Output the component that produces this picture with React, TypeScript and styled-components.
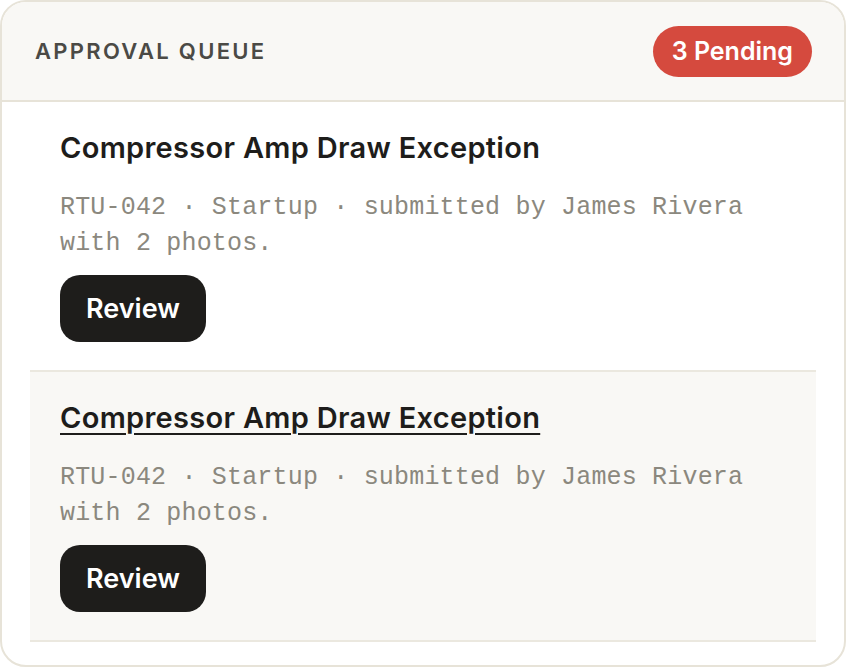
import styled, { createGlobalStyle } from 'styled-components'

const colors = {
  border: '#e7e3d8',
  divider: '#ebe8df',
  muted: '#f9f8f5',
  ink: '#1e1d1b',
  label: '#4b4a45',
  mono: '#8b887e',
  danger: '#d54a3e',
  white: '#ffffff',
}

const items = [
  { id: 1, title: 'Compressor Amp Draw Exception', meta: 'RTU-042 · Startup · submitted by James Rivera with 2 photos.', active: false },
  { id: 2, title: 'Compressor Amp Draw Exception', meta: 'RTU-042 · Startup · submitted by James Rivera with 2 photos.', active: true },
]

const GlobalStyle = createGlobalStyle`
  html, body {
    margin: 0;
    padding: 0;
    background: ${colors.white};
  }
  body {
    font-family: Inter, 'Noto Sans', sans-serif;
  }
  * {
    box-sizing: border-box;
  }
`

const App = () => {
  return (
    <>
      <GlobalStyle />
      <Card>
        <Header>
          <Heading>Approval Queue</Heading>
          <Badge>3 Pending</Badge>
        </Header>
        <List>
          {items.map((item) => (
            <Item key={item.id} $active={item.active}>
              <Title $active={item.active}>{item.title}</Title>
              <Meta>{item.meta}</Meta>
              <ReviewButton>Review</ReviewButton>
            </Item>
          ))}
        </List>
      </Card>
    </>
  )
}

const Card = styled.div`
  display: flex;
  flex-direction: column;
  width: 846px;
  height: 667px;
  border: 2px solid ${colors.border};
  border-radius: 26px;
  overflow: hidden;
  background: ${colors.white};
`

const Header = styled.div`
  display: flex;
  align-items: center;
  justify-content: space-between;
  height: 100px;
  padding: 0 32px 0 33px;
  background: ${colors.muted};
  border-bottom: 2px solid ${colors.border};
`

const Heading = styled.h2`
  margin: 0;
  font-size: 22px;
  font-weight: 600;
  letter-spacing: 2.3px;
  text-transform: uppercase;
  color: ${colors.label};
`

const Badge = styled.span`
  display: inline-flex;
  align-items: center;
  justify-content: center;
  height: 51px;
  padding: 0 19px;
  border-radius: 999px;
  background: ${colors.danger};
  color: ${colors.white};
  font-size: 25px;
  font-weight: 600;
`

const List = styled.div`
  display: flex;
  flex-direction: column;
  padding: 0 28px;
`

const Item = styled.div<{ $active: boolean }>`
  display: flex;
  flex-direction: column;
  align-items: flex-start;
  padding: 28px 30px;
  background: ${(p) => (p.$active ? colors.muted : 'transparent')};
  ${(p) =>
    p.$active &&
    `
    border-top: 2px solid ${colors.divider};
    border-bottom: 2px solid ${colors.divider};
  `}
`

const Title = styled.h3<{ $active: boolean }>`
  margin: 0;
  font-size: 29px;
  line-height: 36px;
  font-weight: 600;
  letter-spacing: 0.3px;
  color: ${colors.ink};
  text-decoration: ${(p) => (p.$active ? 'underline' : 'none')};
  text-decoration-thickness: 2px;
  text-underline-offset: 5px;
`

const Meta = styled.p`
  margin: 24px 0 0;
  max-width: 720px;
  font-family: 'Liberation Mono', 'DejaVu Sans Mono', monospace;
  font-size: 25px;
  line-height: 36px;
  letter-spacing: 0.18px;
  color: ${colors.mono};
`

const ReviewButton = styled.button`
  margin-top: 13px;
  height: 67px;
  padding: 0 26px;
  border: none;
  border-radius: 20px;
  background: ${colors.ink};
  color: ${colors.white};
  font-family: Inter, 'Noto Sans', sans-serif;
  font-size: 27px;
  font-weight: 600;
  cursor: pointer;
`

export default App
